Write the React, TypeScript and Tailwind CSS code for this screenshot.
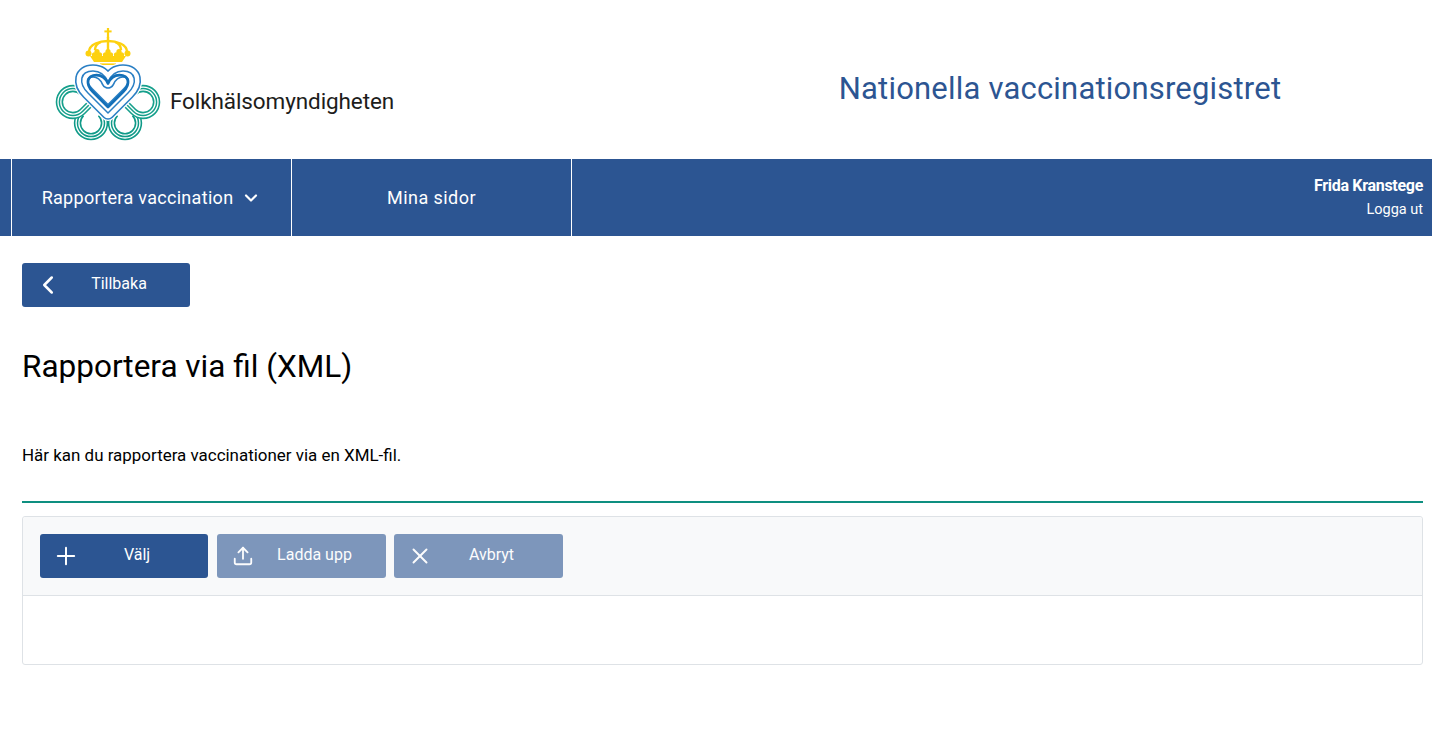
import { ChevronDown, ChevronLeft, Plus, Upload, X } from 'lucide-react'

const font = "font-['Roboto',sans-serif]"

// Band med tre linjer: ytterkanter och en mittlinje
function TripleBand({ d, color, width }: { d: string; color: string; width: number }) {
  return (
    <g strokeLinejoin="round">
      <path d={d} stroke={color} strokeWidth={width} />
      <path d={d} stroke="#fff" strokeWidth={width - 3.2} />
      <path d={d} stroke={color} strokeWidth="1.5" />
    </g>
  )
}

function Logo() {
  const heart =
    'M108 113 L88 93 C78 83 80 71 93 71 C100 71 105 75 108 82 C111 75 116 71 123 71 C136 71 138 83 128 93 Z'
  const loops =
    'M82.5 92.5 A13.5 13.5 0 1 0 82.5 111.5 L108 86 L133.5 111.5 A13.5 13.5 0 1 0 133.5 92.5 L108 117 Z'
  const bottomLeft = 'M100.5 113.5 A13.5 13.5 0 1 1 81.5 113.5'
  const bottomRight = 'M134.5 113.5 A13.5 13.5 0 1 1 115.5 113.5'

  return (
    <svg width="116" height="120" viewBox="50 25 116 120" fill="none" className="mt-[25px] shrink-0 self-start">
      {/* krona */}
      <g fill="#fdd10f">
        <rect x="106.9" y="28" width="2.2" height="10" />
        <rect x="104.4" y="30.4" width="7.2" height="2" />
        <path d="M90 56 H126 L122 62 H94 Z" />
        <rect x="100" y="63.4" width="16" height="1.6" />
        <circle cx="88.5" cy="53.5" r="3" />
        <circle cx="127.5" cy="53.5" r="3" />
        {[97, 108, 119].map((cx) => (
          <g key={cx}>
            <circle cx={cx} cy="51.6" r="2.6" />
            <circle cx={cx - 2.5} cy="54.8" r="2.6" />
            <circle cx={cx + 2.5} cy="54.8" r="2.6" />
          </g>
        ))}
      </g>
      <g stroke="#fdd10f" strokeWidth="2.4">
        <path d="M89 52 C89 44 100 41 108 41 C116 41 127 44 127 52" />
        <path d="M108 37 V50" />
        <path d="M101 42 C96 44 95 47 95 50" />
        <path d="M115 42 C120 44 121 47 121 50" />
      </g>

      {/* gröna öglor */}
      <TripleBand d={bottomLeft} color="#0f9a88" width={7.4} />
      <TripleBand d={bottomRight} color="#0f9a88" width={7.4} />
      <TripleBand d={loops} color="#159f8b" width={7.4} />

      {/* hjärta */}
      <path d={heart} stroke="#fff" strokeWidth="16" strokeLinejoin="round" />
      <path d={heart} fill="#fff" />
      <TripleBand d={heart} color="#2a7fc4" width={13.5} />
      <g transform="translate(108 88) scale(.76) translate(-108 -88)">
        <path d={heart} stroke="#1470b8" strokeWidth="3.6" strokeLinejoin="round" />
      </g>
    </svg>
  )
}

function ActionButton({
  icon,
  label,
  muted,
  width,
  className = '',
}: {
  icon: React.ReactNode
  label: string
  muted?: boolean
  width: string
  className?: string
}) {
  return (
    <button
      className={`flex h-11 items-center rounded-[3px] bg-[#2c5592] pr-[11px] pl-4 text-[16px] text-white ${width} ${className} ${
        muted ? 'opacity-60' : ''
      }`}
    >
      <span className="flex w-[20px] shrink-0 justify-center">{icon}</span>
      <span className="flex-1 pb-[2px] pl-px text-center">{label}</span>
    </button>
  )
}

export default function App() {
  return (
    <div className={`min-h-[748px] bg-white text-black ${font}`}>
      <header className="flex h-[159px]">
        <div className="flex w-[688px] items-center pl-[50px]">
          <Logo />
          <span className="mt-[44px] ml-1 text-[22.5px] tracking-[-0.1px] text-[#1d1d1b]">Folkhälsomyndigheten</span>
        </div>
        <div className="flex flex-1 items-center justify-center pt-[20px]">
          <h2 className="text-[31px] tracking-[0.2px] text-[#2c5592]">Nationella vaccinationsregistret</h2>
        </div>
      </header>

      <nav className="flex h-[77px] bg-[#2c5592] pl-[11px] text-white">
        <div className="flex w-[281px] items-center justify-center gap-[8px] border-x border-white text-[18px] tracking-[0.3px]">
          <span>Rapportera vaccination</span>
          <ChevronDown size={20} strokeWidth={2.6} />
        </div>
        <div className="flex w-[280px] items-center justify-center border-r border-white text-[18px] tracking-[0.45px]">
          Mina sidor
        </div>
        <div className="flex flex-1 flex-col items-end justify-center gap-[7px] pr-[9px] pb-px">
          <span className="text-[16px] leading-[18px] font-bold tracking-[-0.3px]">Frida Kranstege</span>
          <span className="text-[14.5px] leading-[16px]">Logga ut</span>
        </div>
      </nav>

      <main className="pr-[9px] pl-[22px]">
        <button className="mt-[27px] flex h-11 w-[168px] items-center rounded-[3px] bg-[#2c5592] pr-[11px] pl-4 text-[16px] text-white">
          <span className="flex w-[20px] shrink-0 justify-center">
            <ChevronLeft size={30} strokeWidth={2} className="shrink-0" />
          </span>
          <span className="flex-1 pb-[2px] pl-px text-center">Tillbaka</span>
        </button>

        <h1 className="mt-[40px] text-[31.5px] leading-10">Rapportera via fil (XML)</h1>

        <p className="mt-[56px] text-[16.95px] leading-6">Här kan du rapportera vaccinationer via en XML-fil.</p>

        <div className="mt-[34px] h-[2px] bg-[#0e8f80]" />

        <section className="mt-[13px] h-[149px] rounded-[3px] border border-[#dee2e6]">
          <div className="flex h-[79px] gap-[9px] rounded-t-[3px] border-b border-[#dee2e6] bg-[#f8f9fa] pt-[17px] pl-[17px]">
            <ActionButton width="w-[168px]" label="Välj" icon={<Plus size={28} strokeWidth={1.7} className="shrink-0" />} />
            <ActionButton width="w-[169px]" muted label="Ladda upp" icon={<Upload size={22} strokeWidth={2} className="shrink-0" />} />
            <ActionButton width="w-[169px]" className="-ml-px" muted label="Avbryt" icon={<X size={26} strokeWidth={1.8} className="shrink-0" />} />
          </div>
        </section>
      </main>
    </div>
  )
}
